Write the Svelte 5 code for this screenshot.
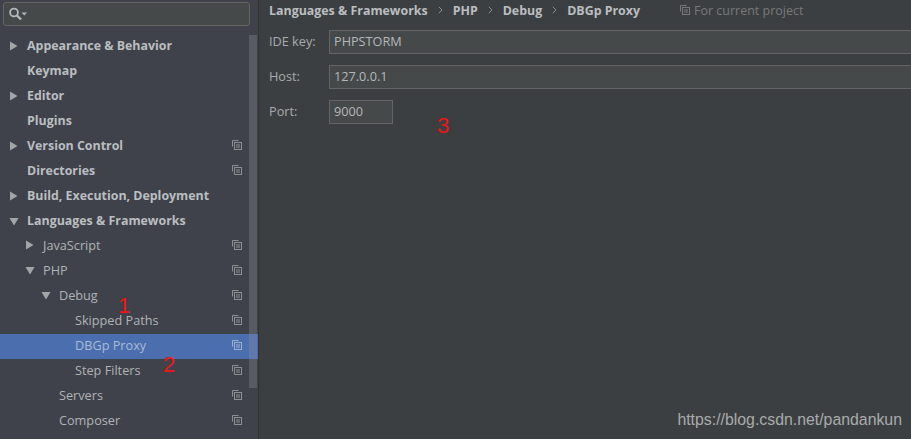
<script>
  const rows = [
    { label: 'Appearance & Behavior', level: 0, arrow: 'right', bold: true },
    { label: 'Keymap', level: 0, bold: true },
    { label: 'Editor', level: 0, arrow: 'right', bold: true },
    { label: 'Plugins', level: 0, bold: true },
    { label: 'Version Control', level: 0, arrow: 'right', bold: true, copy: true },
    { label: 'Directories', level: 0, bold: true, copy: true },
    { label: 'Build, Execution, Deployment', level: 0, arrow: 'right', bold: true },
    { label: 'Languages & Frameworks', level: 0, arrow: 'down', bold: true },
    { label: 'JavaScript', level: 1, arrow: 'right', copy: true },
    { label: 'PHP', level: 1, arrow: 'down', copy: true },
    { label: 'Debug', level: 2, arrow: 'down', copy: true },
    { label: 'Skipped Paths', level: 3, copy: true },
    { label: 'DBGp Proxy', level: 3, copy: true, selected: true },
    { label: 'Step Filters', level: 3, copy: true },
    { label: 'Servers', level: 2, copy: true },
    { label: 'Composer', level: 2, copy: true }
  ];
  const crumbs = ['Languages & Frameworks', 'PHP', 'Debug', 'DBGp Proxy'];
  const fields = [
    { label: 'IDE key:', value: 'PHPSTORM' },
    { label: 'Host:', value: '127.0.0.1' },
    { label: 'Port:', value: '9000', short: true }
  ];
</script>

{#snippet copyIcon()}
  <svg class="copy" width="10" height="10" viewBox="0 0 10 10" fill="none" stroke="currentColor" stroke-width="1">
    <path d="M0.5 6.5V0.5H6.5" />
    <rect x="2.5" y="2.5" width="7" height="7" />
    <path d="M4 5H8M4 7H8" />
  </svg>
{/snippet}

<div class="window">
  <aside class="sidebar">
    <div class="search-wrap">
      <div class="search">
        <svg width="20" height="15" viewBox="0 0 20 15" fill="none">
          <circle cx="5" cy="5.5" r="3.9" stroke="#b4b7b9" stroke-width="1.8" />
          <path d="M8 8.5L12 12.5" stroke="#b4b7b9" stroke-width="2.4" />
          <path d="M12.5 5.5h5.5l-2.75 3z" fill="#b4b7b9" />
        </svg>
      </div>
    </div>
    <div class="tree">
      {#each rows as row}
        <div class="row l{row.level}" class:selected={row.selected}>
          <span class="arrow-slot" class:top={row.bold}>
            {#if row.arrow === 'right'}
              <svg width="9" height="10" viewBox="0 0 9 10"><path d="M1 0.5L8.5 5L1 9.5z" fill="#a3a6a8" /></svg>
            {:else if row.arrow === 'down'}
              <svg width="10" height="9" viewBox="0 0 10 9"><path d="M0.5 1H9.5L5 8.5z" fill="#a3a6a8" /></svg>
            {/if}
          </span>
          <span class="label" class:bold={row.bold}>{row.label}</span>
          {#if row.copy}{@render copyIcon()}{/if}
        </div>
      {/each}
    </div>
    <div class="scrollbar"></div>
  </aside>

  <main class="content">
    <header class="crumbs">
      {#each crumbs as crumb, i}
        {#if i > 0}
          <svg class="sep" width="5" height="8" viewBox="0 0 5 8" fill="none"><path d="M0.8 0.8L4 4L0.8 7.2" stroke="#8b8e90" /></svg>
        {/if}
        <span>{crumb}</span>
      {/each}
      <span class="scope">{@render copyIcon()}For current project</span>
    </header>
    <div class="form">
      {#each fields as field}
        <div class="field">
          <span class="field-label">{field.label}</span>
          <div class="input" class:short={field.short}>{field.value}</div>
        </div>
      {/each}
    </div>
  </main>

  <span class="note n1">1</span>
  <span class="note n2">2</span>
  <span class="note n3">3</span>
  <span class="watermark">https://blog.csdn.net/pandankun</span>
</div>

<style>
  :global(body) {
    margin: 0;
    background: #3c3f41;
    overflow: hidden;
  }
  .window {
    position: relative;
    display: flex;
    width: 911px;
    height: 439px;
    overflow: hidden;
    font-family: "Open Sans", "Noto Sans", sans-serif;
    font-size: 12.7px;
    color: #b0b3b5;
  }
  .sidebar {
    position: relative;
    flex: 0 0 258px;
    background: #3f424b;
    border-right: 1px solid #323232;
  }
  .search-wrap {
    padding: 2px 8px 0 3px;
  }
  .search {
    display: flex;
    align-items: center;
    box-sizing: border-box;
    height: 24px;
    padding-left: 5px;
    background: #45494a;
    border: 1px solid #646464;
    border-radius: 3px;
  }
  .tree {
    padding-top: 8px;
  }
  .row {
    display: flex;
    align-items: center;
    box-sizing: border-box;
    height: 25px;
    padding-right: 16px;
    padding-bottom: 3px;
  }
  .row.selected {
    background: #4b6eaf;
    color: #a9bbd6;
  }
  .arrow-slot {
    display: flex;
    align-items: center;
    width: 10px;
    margin-right: 8px;
  }
  .arrow-slot.top {
    padding-top: 2px;
  }
  .l0 { padding-left: 9px; }
  .l1 { padding-left: 25px; }
  .l2 { padding-left: 41px; }
  .l3 { padding-left: 57px; }
  .label {
    flex: 1;
    color: inherit;
    line-height: 16px;
  }
  .label.bold {
    padding-top: 2px;
    font-weight: 700;
    font-size: 12.4px;
    color: #bbbec0;
  }
  .copy {
    flex: none;
    color: #8d9194;
  }
  .selected .copy {
    color: #9db0cf;
  }
  .scrollbar {
    position: absolute;
    left: 249px;
    top: 35px;
    width: 8px;
    height: 353px;
    background: rgba(150, 150, 160, 0.3);
  }
  .content {
    flex: 1;
    min-width: 0;
  }
  .crumbs {
    display: flex;
    align-items: center;
    height: 20px;
    padding-left: 10px;
    font-weight: 700;
    font-size: 12.4px;
    color: #bbbec0;
  }
  .sep {
    margin: 0 10px 0 10px;
  }
  .scope {
    display: flex;
    align-items: center;
    gap: 4px;
    margin-left: 40px;
    font-weight: 400;
    font-size: 12.5px;
    color: #787878;
  }
  .scope .copy {
    color: #787878;
  }
  .form {
    display: flex;
    flex-direction: column;
    gap: 11px;
    padding-top: 10px;
  }
  .field {
    display: flex;
    align-items: center;
    padding-left: 10px;
  }
  .field-label {
    width: 60px;
    padding-bottom: 2px;
    color: #a8abad;
  }
  .input {
    flex: 1;
    box-sizing: border-box;
    height: 24px;
    line-height: 20px;
    padding-left: 4px;
    margin-right: -4px;
    background: #45494a;
    border: 1px solid #646464;
    color: #b5b8ba;
  }
  .input.short {
    flex: 0 0 64px;
  }
  .note {
    position: absolute;
    color: #f01414;
    font-family: "Liberation Sans", sans-serif;
    font-size: 22px;
    line-height: 22px;
  }
  .n1 { left: 118px; top: 295px; }
  .n2 { left: 163px; top: 354px; }
  .n3 { left: 437px; top: 115px; }
  .watermark {
    position: absolute;
    right: 9px;
    top: 410px;
    font-family: "Liberation Sans", sans-serif;
    font-size: 15.85px;
    line-height: 20px;
    color: #a9abac;
  }
</style>
